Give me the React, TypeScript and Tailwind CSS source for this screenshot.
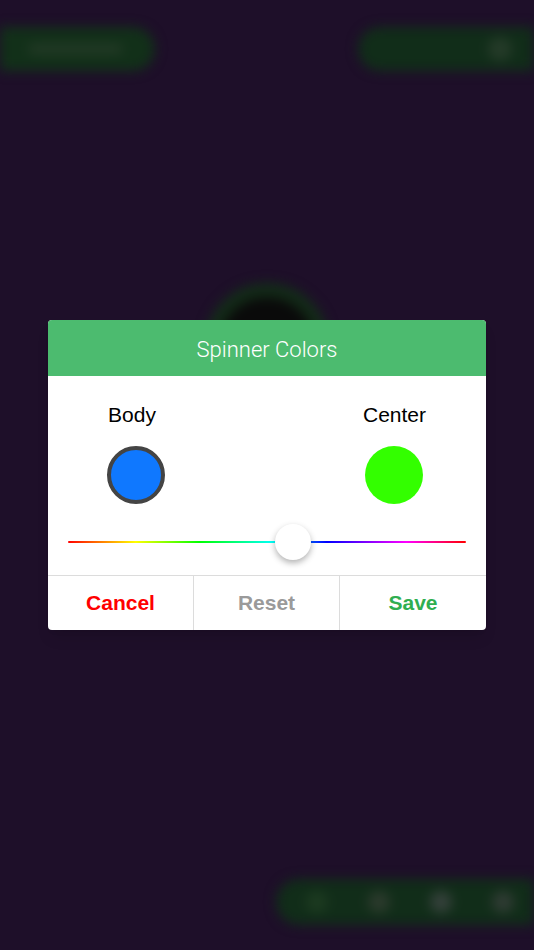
import React from 'react'

const font = { fontFamily: '"Liberation Sans", Arial, sans-serif' }

export default function App() {
  return (
    <div className="relative w-[534px] h-[950px] overflow-hidden bg-[#1e0f29]" style={font}>
      {/* Blurred background app */}
      <div className="flex flex-col h-full blur-[6px]">
        <div className="flex justify-between items-center pt-[27px]">
          <div className="w-[155px] h-[44px] rounded-r-full bg-[#123019] flex items-center pl-[28px]">
            <div className="w-[95px] h-[10px] rounded-full bg-[#233a26]" />
          </div>
          <div className="w-[176px] h-[44px] rounded-l-full bg-[#112d19] flex items-center justify-end pr-[22px]">
            <div className="w-[24px] h-[24px] rounded-full bg-[#243a28]" />
          </div>
        </div>
        <div className="flex justify-center pt-[212px]">
          <div className="w-[124px] h-[124px] rounded-full bg-[#0a0a0a] border-[14px] border-[#132c18]" />
        </div>
        <div className="flex-1" />
        <div className="flex justify-end pb-[25px]">
          <div className="w-[258px] h-[46px] rounded-l-full bg-[#112d19] flex items-center justify-around pl-[10px]">
            <div className="w-[22px] h-[22px] rounded-full bg-[#1c3a20]" />
            <div className="w-[22px] h-[22px] rounded-full bg-[#2b3a2c]" />
            <div className="w-[22px] h-[22px] rounded-full bg-[#34403a]" />
            <div className="w-[22px] h-[22px] rounded-full bg-[#2f3b33]" />
          </div>
        </div>
      </div>

      {/* Dialog */}
      <div className="absolute left-[48px] top-[320px] w-[438px] rounded-[4px] overflow-hidden bg-white shadow-lg">
        <div className="h-[56px] pt-[2px] bg-[#4cbb6f] flex items-center justify-center text-white text-[22px] font-light font-['Roboto',sans-serif]">
          Spinner Colors
        </div>
        <div className="flex justify-between pl-[59px] pr-[60px] pt-[28px]">
          <div className="flex flex-col items-center">
            <span className="text-[21px] text-black leading-none pr-[8px]">Body</span>
            <div className="mt-[21px] w-[58px] h-[58px] rounded-full bg-[#0f78ff] border-[4px] border-[#444444]" />
          </div>
          <div className="flex flex-col items-center">
            <span className="text-[21px] text-black leading-none">Center</span>
            <div className="mt-[21px] w-[58px] h-[58px] rounded-full bg-[#33ff00]" />
          </div>
        </div>
        <div className="relative h-[71px] mx-[20px] flex items-center">
          <div
            className="h-[2px] w-full mt-[5px] rounded-full"
            style={{
              background:
                'linear-gradient(to right, #ff0000 0%, #ffff00 17%, #00ff00 33%, #00ffff 52%, #0000ff 65%, #ff00ff 85%, #ff0000 100%)',
            }}
          />
          <div className="absolute left-[207px] top-[20px] w-[36px] h-[36px] rounded-full bg-white shadow-[0_3px_6px_rgba(0,0,0,0.3)]" />
        </div>
        <div className="flex h-[55px] border-t border-[#dcdcdc]">
          <div className="w-[146px] flex items-center justify-center border-r border-[#dcdcdc] text-[21px] font-bold text-[#ff0000]">
            Cancel
          </div>
          <div className="w-[146px] flex items-center justify-center border-r border-[#dcdcdc] text-[21px] font-bold text-[#9a9a9a]">
            Reset
          </div>
          <div className="flex-1 flex items-center justify-center text-[21px] font-bold text-[#2fae50]">
            Save
          </div>
        </div>
      </div>
    </div>
  )
}
